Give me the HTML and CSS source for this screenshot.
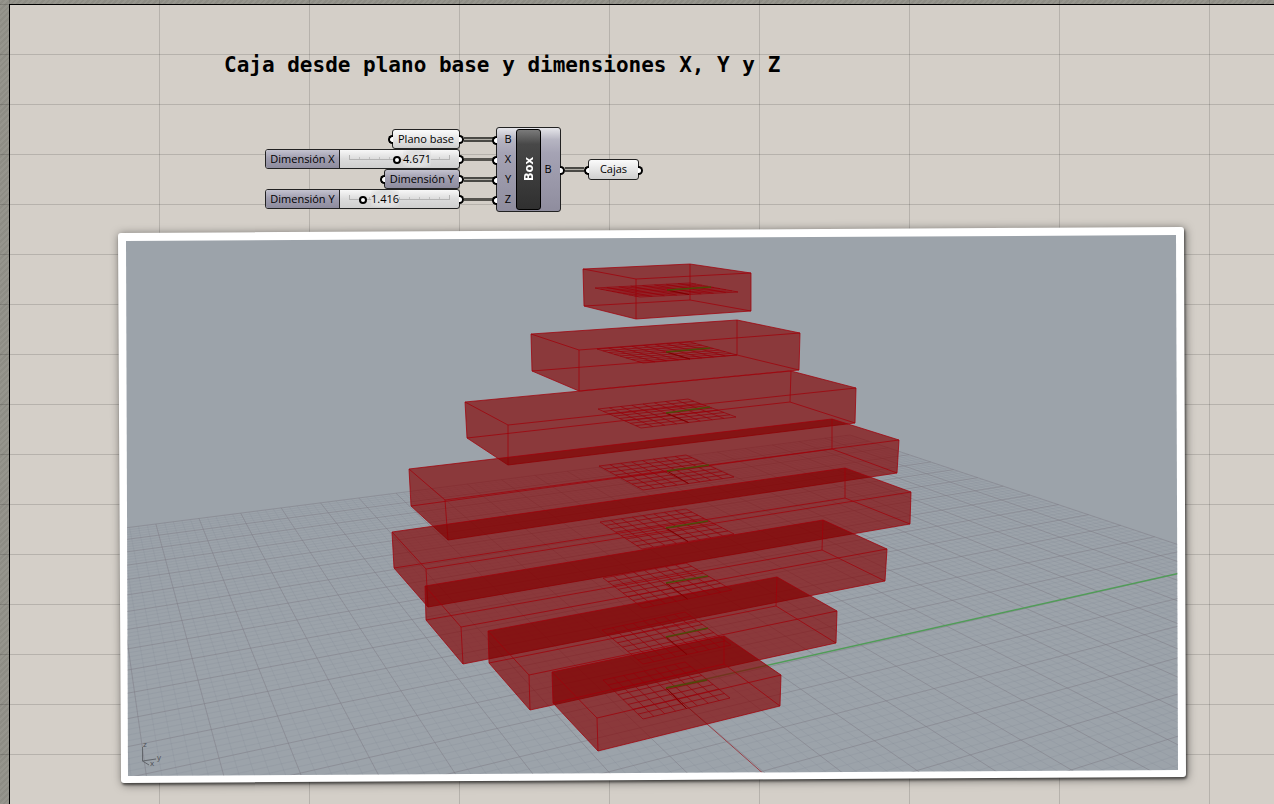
FILE: index.html
```html
<!DOCTYPE html>
<html lang="es">
<head>
<meta charset="utf-8">
<title>Caja desde plano base y dimensiones</title>
<link rel="stylesheet" href="styles.css">
</head>
<body>
<main class="sheet">
  <h1 class="title">Caja desde plano base y dimensiones X, Y y Z</h1>

  <section class="graph">
    <div class="inputs">
      <div class="node node-light port-in port-out">Plano base</div>
      <div class="slider port-out">
        <label class="slider-label" for="dim-x">Dimensión X</label>
        <div class="slider-body">
          <input class="range" id="dim-x" type="range" min="0" max="10" step="0.001" value="4.671">
          <output class="value" for="dim-x" style="left:63px">4.671</output>
        </div>
      </div>
      <div class="node node-dark port-in port-out">Dimensión Y</div>
      <div class="slider port-out">
        <label class="slider-label" for="dim-z">Dimensión Y</label>
        <div class="slider-body">
          <input class="range" id="dim-z" type="range" min="0" max="10" step="0.001" value="1.416">
          <output class="value" for="dim-z" style="left:31px">1.416</output>
        </div>
      </div>
    </div>

    <svg class="wires" width="36" height="85" viewBox="0 0 36 85" aria-hidden="true">
      <g class="wire-list"><path d="M4 12.5H33M4 52.5H33"/></g>
      <g class="wire-core"><path d="M4 12.5H33M4 52.5H33"/></g>
      <g class="wire"><path d="M4 32.5H33M4 72.5H33"/></g>
    </svg>

    <div class="component">
      <ul class="params params-in">
        <li class="port-in">B</li>
        <li class="port-in">X</li>
        <li class="port-in">Y</li>
        <li class="port-in">Z</li>
      </ul>
      <div class="badge"><span>Box</span></div>
      <ul class="params params-out">
        <li class="port-out">B</li>
      </ul>
    </div>

    <svg class="wires" width="27" height="85" viewBox="0 0 27 85" aria-hidden="true">
      <g class="wire-list"><path d="M4 42.5H23"/></g>
      <g class="wire-core"><path d="M4 42.5H23"/></g>
    </svg>

    <div class="node node-light node-result port-in port-out">Cajas</div>
  </section>

  <figure class="photo">
    <svg class="scene" viewBox="110 220 1090 580" role="img" aria-label="Cajas apiladas en perspectiva">
      <defs>
        <clipPath id="view"><polygon points="126,241 1176,235 1178,770 128,776"/></clipPath>
      </defs>
      <polygon class="frame" points="121,236 1181,230 1183,774 124,780"/>
      <g clip-path="url(#view)">
        <rect class="sky" x="110" y="220" width="1090" height="580"/>
        <path class="ground-minor" id="minor"/>
        <path class="ground-major" id="major"/>
        <path class="axis-y" id="axis-y"/>
        <path class="axis-x" id="axis-x"/>
        <g id="boxes"></g>
        <g class="gizmo">
          <path d="M142.500 747V761L149 765M142.500 761L156 759"/>
          <text x="143" y="747">z</text>
          <text x="157" y="760">y</text>
          <text x="150" y="766">x</text>
        </g>
      </g>
    </svg>
  </figure>
</main>
<script src="scene.js"></script>
</body>
</html>
```
FILE: styles.css
```css
*,
*::before,
*::after { box-sizing: border-box; }

html { height: 100%; }

body {
  margin: 0;
  height: 100vh;
  padding: 4px 0 0 9px;
  overflow: hidden;
  font-family: "Open Sans", "Noto Sans", sans-serif;
  font-size: 11px;
  line-height: 17px;
  color: #000;
  background:
    repeating-linear-gradient(to right, transparent 0 9px, rgba(0, 0, 0, 0.14) 9px 10px, transparent 10px 150px),
    repeating-linear-gradient(to bottom, transparent 0 4px, rgba(0, 0, 0, 0.14) 4px 5px, transparent 5px 50px),
    repeating-linear-gradient(135deg, #96958d 0 2px, #8e8d85 2px 4px);
}

.sheet {
  height: 100%;
  padding-top: 46px;
  border-top: 1px solid #000;
  border-left: 1px solid #000;
  background:
    repeating-linear-gradient(to right, transparent 0 149px, rgba(0, 0, 0, 0.14) 149px 150px),
    repeating-linear-gradient(to bottom, transparent 0 49px, rgba(0, 0, 0, 0.14) 49px 50px),
    #d4cfc8;
}

.title {
  margin: 0 0 48px 214px;
  font-family: "DejaVu Sans Mono", monospace;
  font-size: 21px;
  line-height: 28px;
  font-weight: 700;
  white-space: nowrap;
}

/* Node graph */
.graph {
  display: flex;
  align-items: center;
  height: 85px;
  margin-left: 255px;
}

.inputs {
  display: flex;
  flex-direction: column;
  align-items: flex-end;
  align-self: flex-start;
  width: 195px;
  padding-top: 2px;
}

.node,
.slider {
  position: relative;
  height: 20px;
  border: 1px solid #222;
  border-radius: 3px;
  white-space: nowrap;
}

.node { padding: 0 5px; }

.node-light { background: linear-gradient(#fbfbfb, #e8e8e8 45%, #cfcfcf); }

.node-dark,
.slider-label { background: linear-gradient(#c4c3cf, #a09eb0 45%, #8e8c9e); }

.node-result {
  height: 21px;
  width: 51px;
  padding: 0;
  text-align: center;
}

.slider {
  display: flex;
  width: 195px;
  background: linear-gradient(#f8f8f8, #dcdcdc 50%, #cfcfcf);
}

.slider-label {
  width: 74px;
  border-right: 1px solid #222;
  border-radius: 2px 0 0 2px;
  text-align: center;
}

.slider-body {
  position: relative;
  flex: 1;
  padding-left: 5px;
}

.range {
  appearance: none;
  display: block;
  width: 110px;
  height: 18px;
  margin: 0;
  background:
    linear-gradient(#b4b4b4, #b4b4b4) 4px 9px / 101px 1px no-repeat,
    linear-gradient(#b4b4b4, #b4b4b4) 4px 5px / 1px 5px no-repeat,
    linear-gradient(#b4b4b4, #b4b4b4) 104px 5px / 1px 5px no-repeat,
    repeating-linear-gradient(to right, #c0c0c0 0 1px, transparent 1px 10px) 4px 7px / 101px 3px no-repeat;
}

.range::-webkit-slider-thumb {
  appearance: none;
  box-sizing: border-box;
  width: 8px;
  height: 8px;
  margin-top: 2px;
  border: 2px solid #000;
  border-radius: 50%;
  background: #fff;
}

.value {
  position: absolute;
  top: 0;
  background: radial-gradient(#e0e0e0 60%, transparent);
}

/* Connection grips */
.port-in,
.port-out { position: relative; }

.port-in::before,
.port-out::after {
  content: "";
  position: absolute;
  top: 50%;
  width: 5px;
  height: 9px;
  margin-top: -4px;
  border: 2px solid #000;
  background: #fff;
}

.port-in::before {
  right: 100%;
  border-right: 0;
  border-radius: 5px 0 0 5px;
}

.port-out::after {
  left: 100%;
  border-left: 0;
  border-radius: 0 5px 5px 0;
}

.wires { display: block; }
.wire-list { stroke: #4a4945; stroke-width: 5; }
.wire-core { stroke: #b0ada6; stroke-width: 1; }
.wire { stroke: #55534e; stroke-width: 3; }

.component {
  display: flex;
  align-items: stretch;
  width: 65px;
  height: 85px;
  padding: 1px 0;
  border: 1px solid #222;
  border-radius: 3px;
  background: linear-gradient(#e6e6ea, #b6b5c2 14%, #a5a3b4 30%, #8f8d9e);
}

.params {
  flex: 1;
  display: flex;
  flex-direction: column;
  justify-content: center;
  margin: 0;
  padding: 0;
  list-style: none;
  text-align: center;
}

.params li {
  height: 20px;
  line-height: 18px;
}

.params-in li { padding-left: 3px; }
.params-out li { padding-right: 5px; }

.badge {
  display: flex;
  align-items: center;
  justify-content: center;
  width: 25px;
  border: 1px solid #000;
  border-radius: 3px;
  background: linear-gradient(#7a7a7a, #484848 18%, #303030);
  color: #fff;
  font-size: 13px;
  font-weight: 700;
}

.badge span {
  writing-mode: vertical-rl;
  transform: rotate(180deg);
}

/* Viewport picture */
.photo { margin: 8px 74px 0 100px; }

.scene {
  display: block;
  width: 100%;
  height: auto;
  overflow: visible;
}

.frame {
  fill: #fff;
  stroke: #fff;
  stroke-width: 6;
  stroke-linejoin: round;
  filter: drop-shadow(1px 2px 1px rgba(0, 0, 0, 0.5)) drop-shadow(1px 1px 4px rgba(0, 0, 0, 0.5));
}

.sky { fill: #9ca3aa; }
.ground-minor { fill: none; stroke: #7c808a; stroke-opacity: 0.15; }
.ground-major { fill: none; stroke: #7d7b86; stroke-opacity: 0.5; }
.axis-y { stroke: #519c58; stroke-width: 1.5; }
.axis-x { stroke: #9a4048; stroke-width: 1; }
.box-fill { fill: rgba(130, 0, 0, 0.65); }
.box-edges { fill: none; stroke: #a0000a; stroke-opacity: 0.75; }
.plane-grid { fill: none; stroke: #970008; stroke-opacity: 0.7; }
.plane-x { stroke: #7c0000; stroke-width: 1; }
.plane-y { stroke: #4d4a08; stroke-width: 1.5; }
.gizmo path { fill: none; stroke: #62666b; }
.gizmo text { fill: #4e5257; font-size: 8px; }
```
FILE: scene.js
```js
const NS = "http://www.w3.org/2000/svg";

// Ground plane to view: i runs toward the viewer, j runs to the left.
function project(i, j) {
  const w = 1 - 0.02321 * i - 0.0116 * j;
  return [(850 - 1.411 * i - 34.86 * j) / w, (435 - 3.975 * i - 1.841 * j) / w];
}

const fmt = (p) => p[0].toFixed(1) + " " + p[1].toFixed(1);
const line = (a, b) => "M" + fmt(a) + "L" + fmt(b);
const mix = (a, b, t) => [a[0] + (b[0] - a[0]) * t, a[1] + (b[1] - a[1]) * t];

const SIZE = 28;
let major = "";
let minor = "";
for (let k = 0; k <= SIZE * 5; k++) {
  const v = k / 5;
  const d = line(project(v, 0), project(v, SIZE)) + line(project(0, v), project(SIZE, v));
  if (k % 5 === 0) major += d;
  else minor += d;
}
document.getElementById("major").setAttribute("d", major);
document.getElementById("minor").setAttribute("d", minor);
document.getElementById("axis-y").setAttribute("d", line([666, 688], project(14, 0)));
document.getElementById("axis-x").setAttribute("d", line([666, 688], [766, 776]));

// Corners in the order left, back, right, front; plane is the grid inside the box.
const boxes = [
  { top: [[583,269],[690,264],[751,273],[636,279]], base: [[584,306],[690,300],[751,311],[636,319]],
    plane: [[595,288],[690,283],[738,292],[640,297]], origin: [667,290], y: [711,287] },
  { top: [[531,334],[737,320],[800,333],[579,350]], base: [[532,371],[737,355],[799,370],[579,391]],
    plane: [[597,349],[690,342],[737,355],[643,363]], origin: [666,352], y: [710,348] },
  { top: [[465,402],[791,371],[856,388],[508,425]], base: [[467,438],[790,402],[855,423],[508,465]],
    plane: [[598,409],[688,399],[736,417],[641,428]], origin: [666,413], y: [710,407] },
  { top: [[409,469],[832,419],[899,440],[445,500]], base: [[411,506],[832,449],[897,473],[448,540]],
    plane: [[599,466],[686,455],[734,477],[643,490]], origin: [667,471], y: [709,465] },
  { top: [[392,532],[845,468],[911,492],[426,569]], base: [[394,568],[845,498],[910,524],[428,607]],
    plane: [[600,522],[686,509],[734,534],[642,549]], origin: [666,528], y: [708,521] },
  { top: [[425,586],[823,520],[887,549],[461,627]], base: [[426,620],[822,550],[885,581],[463,664]],
    plane: [[603,578],[686,563],[732,590],[643,608]], origin: [666,583], y: [708,576] },
  { top: [[488,631],[777,577],[837,611],[529,675]], base: [[489,663],[776,606],[836,643],[530,710]],
    plane: [[602,630],[685,612],[731,645],[643,664]], origin: [666,637], y: [708,628] },
  { top: [[552,672],[724,636],[781,675],[597,718]], base: [[553,703],[724,664],[780,706],[598,751]],
    plane: [[603,680],[685,662],[730,698],[643,719]], origin: [666,688], y: [707,680] }
];

const host = document.getElementById("boxes");
function add(cls, d) {
  const el = document.createElementNS(NS, "path");
  el.setAttribute("class", cls);
  el.setAttribute("d", d);
  host.appendChild(el);
}

const ring = (pts) => "M" + pts.map(fmt).join("L") + "Z";

for (const box of boxes) {
  const [tl, tb, tr, tf] = box.top;
  const [bl, bb, br, bf] = box.base;
  add("box-fill", ring([tl, tb, tr, br, bf, bl]));
  add("box-edges", ring(box.top) + ring(box.base) + line(tl, bl) + line(tb, bb) + line(tr, br) + line(tf, bf));
}

for (const box of boxes) {
  const [l, b, r, f] = box.plane;
  let d = "";
  for (let k = 0; k <= 8; k++) {
    const t = k / 8;
    d += line(mix(l, b, t), mix(f, r, t)) + line(mix(l, f, t), mix(b, r, t));
  }
  add("plane-grid", d);
  add("plane-x", line(box.origin, mix(f, r, 0.5)));
  add("plane-y", line(box.origin, box.y));
}
```
